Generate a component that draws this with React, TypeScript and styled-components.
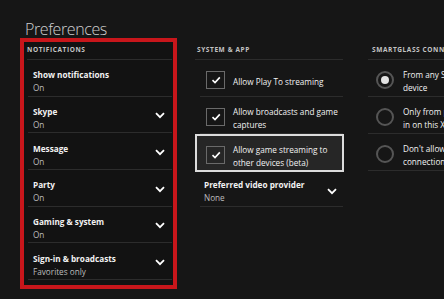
import React from 'react';
import styled, { createGlobalStyle } from 'styled-components';

const colors = {
    background: '#161616',
    text: '#f2f2f2',
    muted: '#bcbcbc',
    header: '#c4c4c4',
    line: '#2c2c2c',
    red: '#c8161b',
    box: '#6a6a6a',
    highlight: '#262626',
};

const GlobalStyle = createGlobalStyle`
    html, body {
        margin: 0;
        padding: 0;
        background: ${colors.background};
    }
    body {
        font-family: "Open Sans", "Noto Sans", sans-serif;
        color: ${colors.text};
    }
`;

const notifications = [
    { label: 'Show notifications', value: 'On', expandable: false },
    { label: 'Skype', value: 'On', expandable: true },
    { label: 'Message', value: 'On', expandable: true },
    { label: 'Party', value: 'On', expandable: true },
    { label: 'Gaming & system', value: 'On', expandable: true },
    { label: 'Sign-in & broadcasts', value: 'Favorites only', expandable: true },
];

const systemOptions = [
    { lines: ['Allow Play To streaming'], focused: false },
    { lines: ['Allow broadcasts and game', 'captures'], focused: false },
    { lines: ['Allow game streaming to', 'other devices (beta)'], focused: true },
];

const smartglassOptions = [
    { lines: ['From any SmartGlass', 'device'], selected: true },
    { lines: ['Only from profiles signed', 'in on this Xbox'], selected: false },
    { lines: ["Don't allow SmartGlass", 'connections'], selected: false },
];

const Chevron = () => (
    <ChevronIcon viewBox="0 0 10 7">
        <polyline points="1,1.2 5,5.2 9,1.2" fill="none" stroke="#fff" strokeWidth="1.8" />
    </ChevronIcon>
);

const App = () => {
    return (
        <>
            <GlobalStyle />
            <Page>
                <Title>Preferences</Title>
                <Columns>
                    <NotificationsPanel>
                        <PanelHeader>Notifications</PanelHeader>
                        {notifications.map((item) => (
                            <SettingRow key={item.label}>
                                <SettingText>
                                    <SettingLabel>{item.label}</SettingLabel>
                                    <SettingValue>{item.value}</SettingValue>
                                </SettingText>
                                {item.expandable && <Chevron />}
                            </SettingRow>
                        ))}
                    </NotificationsPanel>

                    <SystemColumn>
                        <ColumnHeader>System &amp; app</ColumnHeader>
                        {systemOptions.map((option) => (
                            <CheckRow key={option.lines[0]} $focused={option.focused}>
                                <CheckBox>
                                    <svg viewBox="0 0 18 18" width="18" height="18">
                                        <polyline
                                            points="5.5,9.2 8,11.6 12.8,6.4"
                                            fill="none"
                                            stroke="#fff"
                                            strokeWidth="1.6"
                                        />
                                    </svg>
                                </CheckBox>
                                <OptionText>
                                    {option.lines.map((line) => (
                                        <div key={line}>{line}</div>
                                    ))}
                                </OptionText>
                            </CheckRow>
                        ))}
                        <ProviderRow>
                            <SettingText>
                                <SettingLabel>Preferred video provider</SettingLabel>
                                <SettingValue>None</SettingValue>
                            </SettingText>
                            <Chevron />
                        </ProviderRow>
                    </SystemColumn>

                    <SmartglassColumn>
                        <ColumnHeader>SmartGlass connections</ColumnHeader>
                        {smartglassOptions.map((option) => (
                            <RadioRow key={option.lines[0]}>
                                <Radio $selected={option.selected} />
                                <OptionText>
                                    {option.lines.map((line) => (
                                        <div key={line}>{line}</div>
                                    ))}
                                </OptionText>
                            </RadioRow>
                        ))}
                    </SmartglassColumn>
                </Columns>
            </Page>
        </>
    );
};

const Page = styled.div`
    width: 444px;
    height: 299px;
    overflow: hidden;
    background: ${colors.background};
`;

const Title = styled.div`
    height: 38px;
    box-sizing: border-box;
    padding: 18px 0 0 25px;
    font-size: 16px;
    line-height: 22px;
    font-weight: 300;
    letter-spacing: -0.4px;
    color: #cfcfcf;
    white-space: nowrap;
`;

const Columns = styled.div`
    display: flex;
    align-items: flex-start;
    padding-left: 20px;
`;

const NotificationsPanel = styled.div`
    box-sizing: border-box;
    width: 157px;
    height: 251px;
    flex-shrink: 0;
    border: 4px solid ${colors.red};
    padding: 0 1px 0 4px;
    background: #121212;
`;

const HeaderText = styled.div`
    font-size: 6.5px;
    font-weight: 700;
    letter-spacing: 0.6px;
    text-transform: uppercase;
    color: ${colors.header};
    white-space: nowrap;
`;

const PanelHeader = styled(HeaderText)`
    height: 18px;
    line-height: 16px;
    margin-left: -1px;
    border-bottom: 1px solid ${colors.line};
    box-sizing: border-box;
`;

const ColumnHeader = styled(HeaderText)`
    height: 22px;
    box-sizing: border-box;
    padding: 4px 0 0 3px;
    line-height: 16px;
`;

const SettingRow = styled.div`
    height: 36.67px;
    box-sizing: border-box;
    display: flex;
    align-items: center;
    justify-content: space-between;
    padding: 7px 7px 0 5px;
    border-bottom: 1px solid ${colors.line};

    svg {
        margin-top: -4px;
    }
`;

const SettingText = styled.div`
    display: flex;
    flex-direction: column;
`;

const SettingLabel = styled.div`
    font-size: 8.2px;
    line-height: 13px;
    font-weight: 700;
    color: ${colors.text};
    white-space: nowrap;
`;

const SettingValue = styled.div`
    font-size: 8.2px;
    line-height: 13px;
    color: ${colors.muted};
    white-space: nowrap;
`;

const ChevronIcon = styled.svg`
    width: 10px;
    height: 7px;
    margin-top: 2px;
    flex-shrink: 0;
`;

const SystemColumn = styled.div`
    width: 149px;
    margin-left: 18px;
    flex-shrink: 0;

    ${ColumnHeader} {
        border-bottom: 1px solid ${colors.line};
        margin: 0 1px 0 0;
        padding-left: 2px;
    }
`;

const CheckRow = styled.div<{ $focused: boolean }>`
    box-sizing: border-box;
    display: flex;
    align-items: center;
    gap: 8px;
    height: ${({ $focused }) => ($focused ? '38px' : '37px')};
    margin: ${({ $focused }) => ($focused ? '0' : '0 1px 0 5px')};
    padding-left: ${({ $focused }) => ($focused ? '9px' : '6px')};
    padding-top: 4px;
    border: ${({ $focused }) => ($focused ? '2px solid #dcdcdc' : 'none')};
    border-bottom: ${({ $focused }) =>
        $focused ? '2px solid #dcdcdc' : `1px solid ${colors.line}`};
    background: ${({ $focused }) => ($focused ? colors.highlight : 'transparent')};
`;

const CheckBox = styled.div`
    box-sizing: border-box;
    width: 19px;
    height: 18px;
    flex-shrink: 0;
    border: 1.5px solid ${colors.box};
    display: flex;
    align-items: center;
    justify-content: center;

    svg {
        flex-shrink: 0;
    }
`;

const OptionText = styled.div`
    font-size: 8.2px;
    line-height: 13px;
    margin-top: 2px;
    color: ${colors.text};
    white-space: nowrap;
`;

const ProviderRow = styled.div`
    height: 35px;
    box-sizing: border-box;
    margin: 0 1px 0 5px;
    display: flex;
    align-items: center;
    justify-content: space-between;
    padding: 3px 6px 0 4px;
    border-bottom: 1px solid ${colors.line};
`;

const SmartglassColumn = styled.div`
    margin-left: 21px;
    flex-shrink: 0;
    width: 140px;

    ${ColumnHeader} {
        padding-left: 4px;
        border-bottom: 1px solid ${colors.line};
        margin-left: 3px;
    }
`;

const RadioRow = styled.div`
    height: 37px;
    box-sizing: border-box;
    margin-left: 3px;
    padding-left: 8px;
    padding-top: 4px;
    display: flex;
    align-items: center;
    gap: 9px;
    border-bottom: 1px solid ${colors.line};
`;

const Radio = styled.div<{ $selected: boolean }>`
    box-sizing: border-box;
    width: 18px;
    height: 18px;
    flex-shrink: 0;
    border-radius: 50%;
    border: 2px solid #555;
    display: flex;
    align-items: center;
    justify-content: center;

    &::after {
        content: '';
        display: ${({ $selected }) => ($selected ? 'block' : 'none')};
        width: 8px;
        height: 8px;
        border-radius: 50%;
        background: #e2e2e2;
    }
`;

export default App;
